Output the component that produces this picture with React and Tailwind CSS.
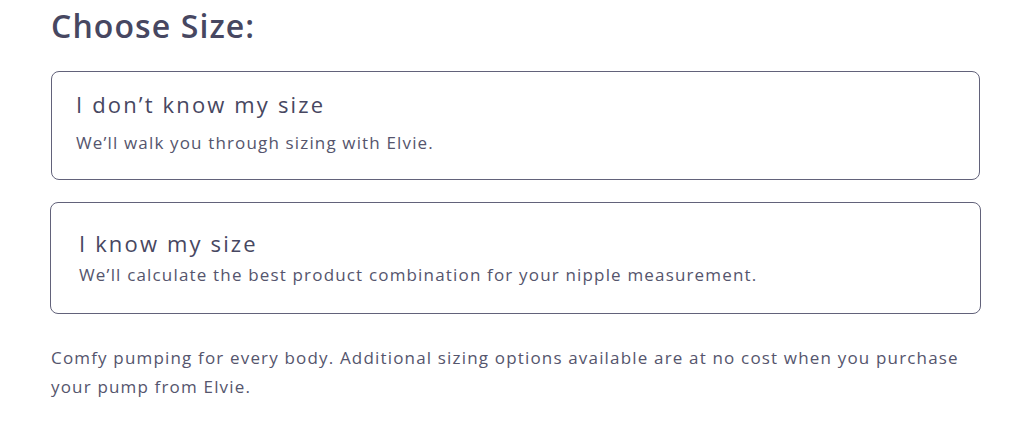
export default function App() {
  return (
    <div
      className="w-[1024px] h-[433px] bg-white text-[#474761] px-[51px] pt-[7px]"
      style={{ fontFamily: "'Open Sans', Lato, sans-serif" }}
    >
      <h2 className="text-[32px] leading-[38px] font-semibold tracking-[1.1px]">Choose Size:</h2>

      <div className="mt-[26px] flex flex-col gap-[22px]">
        <div className="w-[929px] h-[109px] border-[1.5px] border-[#62627a] rounded-[8px] pl-[24px] pt-[18px]">
          <div className="text-[22px] leading-[28px] tracking-[2.15px]">I don’t know my size</div>
          <div className="mt-[14px] text-[17px] leading-[22px] tracking-[1.15px] text-[#55556d]">
            We’ll walk you through sizing with Elvie.
          </div>
        </div>
        <div className="-mx-[1px] w-[931px] h-[112px] border-[1.5px] border-[#62627a] rounded-[8px] pl-[28px] pt-[26px]">
          <div className="text-[22px] leading-[28px] tracking-[2.15px]">I know my size</div>
          <div className="mt-[7px] text-[17px] leading-[22px] tracking-[1.17px] text-[#55556d]">
            We’ll calculate the best product combination for your nipple measurement.
          </div>
        </div>
      </div>

      <p className="mt-[29px] text-[17px] leading-[29px] tracking-[1.17px] text-[#55556d] w-[930px]">
        Comfy pumping for every body. Additional sizing options available are at no cost when you purchase your pump
        from Elvie.
      </p>
    </div>
  );
}
